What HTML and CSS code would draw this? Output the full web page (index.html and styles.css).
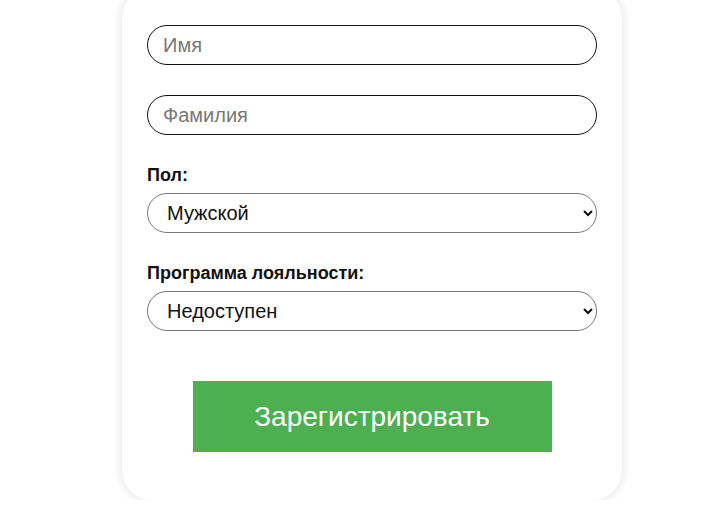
FILE: index.html
```html
<!DOCTYPE html>
<html lang="ru">
  <head>
    <meta charset="UTF-8" />
    <meta name="viewport" content="width=device-width, initial-scale=1.0" />
    <title>Регистрация</title>
    <link rel="stylesheet" href="styles.css">
  </head>
  <body>
    <div class="page">
      <form class="card">
        <input class="field" type="text" name="firstName" placeholder="Имя" />
        <input class="field" type="text" name="lastName" placeholder="Фамилия" />

        <label class="label" for="gender">Пол:</label>
        <select class="select" id="gender" name="gender">
          <option>Мужской</option>
          <option>Женский</option>
        </select>

        <label class="label" for="loyalty">Программа лояльности:</label>
        <select class="select" id="loyalty" name="loyalty">
          <option>Недоступен</option>
          <option>Доступен</option>
        </select>

        <div class="actions">
          <button class="submit" type="button">Зарегистрировать</button>
        </div>
      </form>
    </div>
  </body>
</html>
```

FILE: styles.css
```css
* {
  box-sizing: border-box;
}
body {
  margin: 0;
  background: #fff;
  font-family: "Liberation Sans", Arial, sans-serif;
  overflow: hidden;
}
.page {
  padding-left: 122px;
}
.card {
  width: 500px;
  margin-top: -12px;
  padding: 37px 25px 48px;
  background: #fff;
  border-radius: 30px;
  box-shadow: 0 0 12px rgba(0, 0, 0, 0.12);
  display: flex;
  flex-direction: column;
}
.field {
  height: 40px;
  margin: 0 0 30px;
  padding: 0 15px;
  border: 1px solid #111;
  border-radius: 20px;
  font-family: inherit;
  font-size: 20px;
  color: #222;
  outline: none;
}
.field::placeholder {
  color: #777;
}
.label {
  font-size: 18px;
  font-weight: bold;
  line-height: 20px;
  color: #111;
  margin-bottom: 8px;
}
.select {
  height: 40px;
  margin-bottom: 30px;
  padding: 0 10px 0 15px;
  border: 1px solid #777;
  border-radius: 20px;
  background: #fff;
  font-family: inherit;
  font-size: 20px;
  color: #111;
}
.select:last-of-type {
  margin-bottom: 50px;
}
.actions {
  display: flex;
  justify-content: center;
}
.submit {
  width: 359px;
  height: 71px;
  border: none;
  background: #4caf50;
  color: #fff;
  font-family: inherit;
  font-size: 28px;
  cursor: pointer;
}
```
